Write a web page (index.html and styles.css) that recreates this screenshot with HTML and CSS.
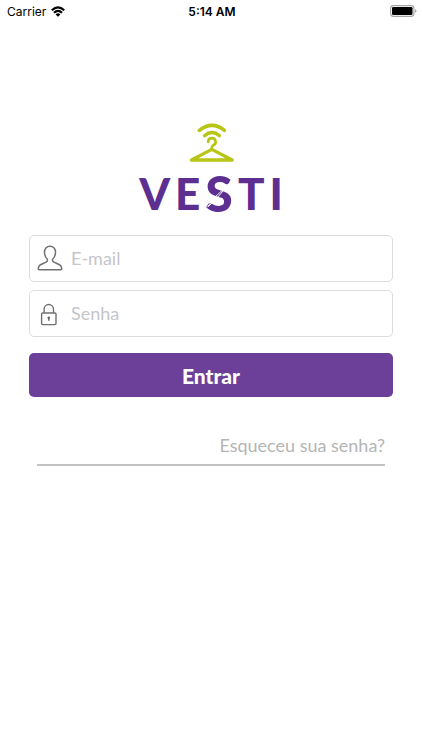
FILE: index.html
```html
<!DOCTYPE html>
<html lang="pt-BR">
<head>
<meta charset="utf-8">
<meta name="viewport" content="width=device-width, initial-scale=1">
<title>Vesti</title>
<link rel="stylesheet" href="styles.css">
</head>
<body>
<header class="status">
  <div class="status-carrier">
    <span>Carrier</span>
    <svg class="wifi" viewBox="0 0 14 11" aria-hidden="true">
      <path d="M.8 4.3Q7-1.6 13.2 4.3M3 6.7Q7 3 11 6.7" fill="none" stroke="#000" stroke-width="2.2"/>
      <path d="M4.6 8.4Q7 6.3 9.4 8.4L7 10.8Z"/>
    </svg>
  </div>
  <span class="status-time">5:14 AM</span>
  <div class="status-battery">
    <svg class="battery" viewBox="0 0 27 12" aria-hidden="true">
      <rect x=".6" y=".6" width="23.3" height="10.8" rx="2.8" fill="none" stroke="#a5a5a5" stroke-width="1.1"/>
      <rect x="2" y="2" width="20.5" height="8" rx="1.3"/>
      <path d="M25 4.2Q26.6 4.8 26.6 6T25 7.8Z" fill="#a5a5a5"/>
    </svg>
  </div>
</header>
<main class="login">
  <div class="brand">
    <svg class="hanger" viewBox="0 0 46 40" aria-hidden="true">
      <g fill="none" stroke="#b9c516" stroke-linecap="round" stroke-linejoin="round">
        <path d="M11.4 7.4Q24-2.6 36.4 7.4" stroke-width="3.6"/>
        <path d="M16.6 12.6Q24 6.6 31.4 12.6" stroke-width="3.4"/>
        <path d="M20.2 19A3.7 3.7 0 1 1 25 22.4Q23.8 22.9 23.8 25.5" stroke-width="2.7"/>
        <path d="M23.8 26.4L3.4 37H44.2L23.8 26.4Z" stroke-width="3.3"/>
      </g>
    </svg>
    <div class="wordmark" role="img" aria-label="Vesti">
      <span>V</span><span>E</span><span class="wordmark-s">S<svg class="needle" viewBox="0 0 30 38" aria-hidden="true"><path d="M27 7L21 13L9 24L3 33L11 26L21 14Z" fill="none" stroke="#fff" stroke-width="1"/></svg></span><span>T</span><span>I</span>
    </div>
  </div>
  <form class="form">
    <div class="field">
      <svg class="icon" viewBox="0 0 26 26" aria-hidden="true">
        <path d="M13 1.2C9.6 1.2 7.4 3.7 7.5 7.3C7.6 10.4 8.8 12.8 10.4 14.2C10.7 16.6 9.8 16.9 7.2 18C3.5 19.5 1.6 20.3 1.2 23.8Q1.2 24.8 2.2 24.8H23.8Q24.8 24.8 24.8 23.8C24.4 20.3 22.5 19.5 18.8 18C16.2 16.9 15.3 16.6 15.6 14.2C17.2 12.8 18.4 10.4 18.5 7.3C18.6 3.7 16.4 1.2 13 1.2Z" fill="none" stroke="#707070" stroke-width="1.5"/>
      </svg>
      <input type="email" placeholder="E-mail" aria-label="E-mail">
    </div>
    <div class="field">
      <svg class="icon" viewBox="0 0 26 26" aria-hidden="true">
        <g fill="none" stroke="#707070" stroke-width="1.4">
          <rect x="4.6" y="13" width="14.4" height="11.6" rx="1"/>
          <path d="M7.1 12.8V9.2A4.7 4.7 0 0 1 16.5 9.2V12.8"/>
        </g>
        <path d="M11.8 16.4A1.3 1.3 0 0 1 12.5 18.8V20.8H11.1V18.8A1.3 1.3 0 0 1 11.8 16.4Z" fill="#606060"/>
      </svg>
      <input type="password" placeholder="Senha" aria-label="Senha">
    </div>
    <button class="submit" type="submit">Entrar</button>
    <a class="forgot" href="#">Esqueceu sua senha?</a>
  </form>
</main>
</body>
</html>
```
FILE: styles.css
```css
* {
  box-sizing: border-box;
}

body {
  margin: 0;
  background: #fff;
  font-family: Lato, "Liberation Sans", sans-serif;
}

.status {
  display: grid;
  grid-template-columns: 1fr auto 1fr;
  align-items: center;
  height: 22px;
  padding: 0 5px 0 7px;
  color: #000;
  font-family: Inter, "Liberation Sans", sans-serif;
  font-size: 12px;
}

.status-carrier {
  display: flex;
  align-items: center;
  gap: 5px;
}

.wifi {
  width: 14px;
  height: 11px;
}

.status-time {
  font-weight: 600;
}

.status-battery {
  display: flex;
  justify-content: flex-end;
}

.battery {
  width: 27px;
  height: 12px;
}

.login {
  padding: 101px 29px 0;
}

.brand {
  display: flex;
  flex-direction: column;
  align-items: center;
}

.hanger {
  width: 46px;
  height: 40px;
}

.wordmark {
  display: flex;
  align-items: center;
  gap: 5px;
  height: 60px;
  color: #5c2f91;
  font-size: 44px;
  font-weight: 900;
  line-height: 60px;
}

.wordmark-s {
  position: relative;
  font-size: 50px;
}

.needle {
  position: absolute;
  inset: 12px 0;
  width: 100%;
  height: 38px;
}

.form {
  display: flex;
  flex-direction: column;
  gap: 8px;
  margin-top: 12px;
}

.field {
  display: flex;
  align-items: center;
  gap: 8px;
  height: 47px;
  padding: 0 7px 2px;
  border: 1px solid #dcdcdc;
  border-radius: 5px;
}

.icon {
  flex: none;
  width: 26px;
  height: 26px;
}

.field input {
  flex: 1;
  min-width: 0;
  padding: 0;
  border: 0;
  outline: 0;
  background: none;
  color: #555;
  font: 18px Lato, "Liberation Sans", sans-serif;
}

.field input::placeholder {
  color: #c5c5ca;
  opacity: 1;
}

.submit {
  height: 44px;
  margin-top: 8px;
  border: 0;
  border-radius: 5px;
  background: #6c3f98;
  color: #fff;
  font: 900 21px Lato, "Liberation Sans", sans-serif;
}

.forgot {
  margin: 28px 8px 0;
  padding-bottom: 7px;
  border-bottom: 2px solid #c2c2c2;
  color: #b5b5b5;
  font-size: 18px;
  line-height: 24px;
  text-align: right;
  text-decoration: none;
}
```
